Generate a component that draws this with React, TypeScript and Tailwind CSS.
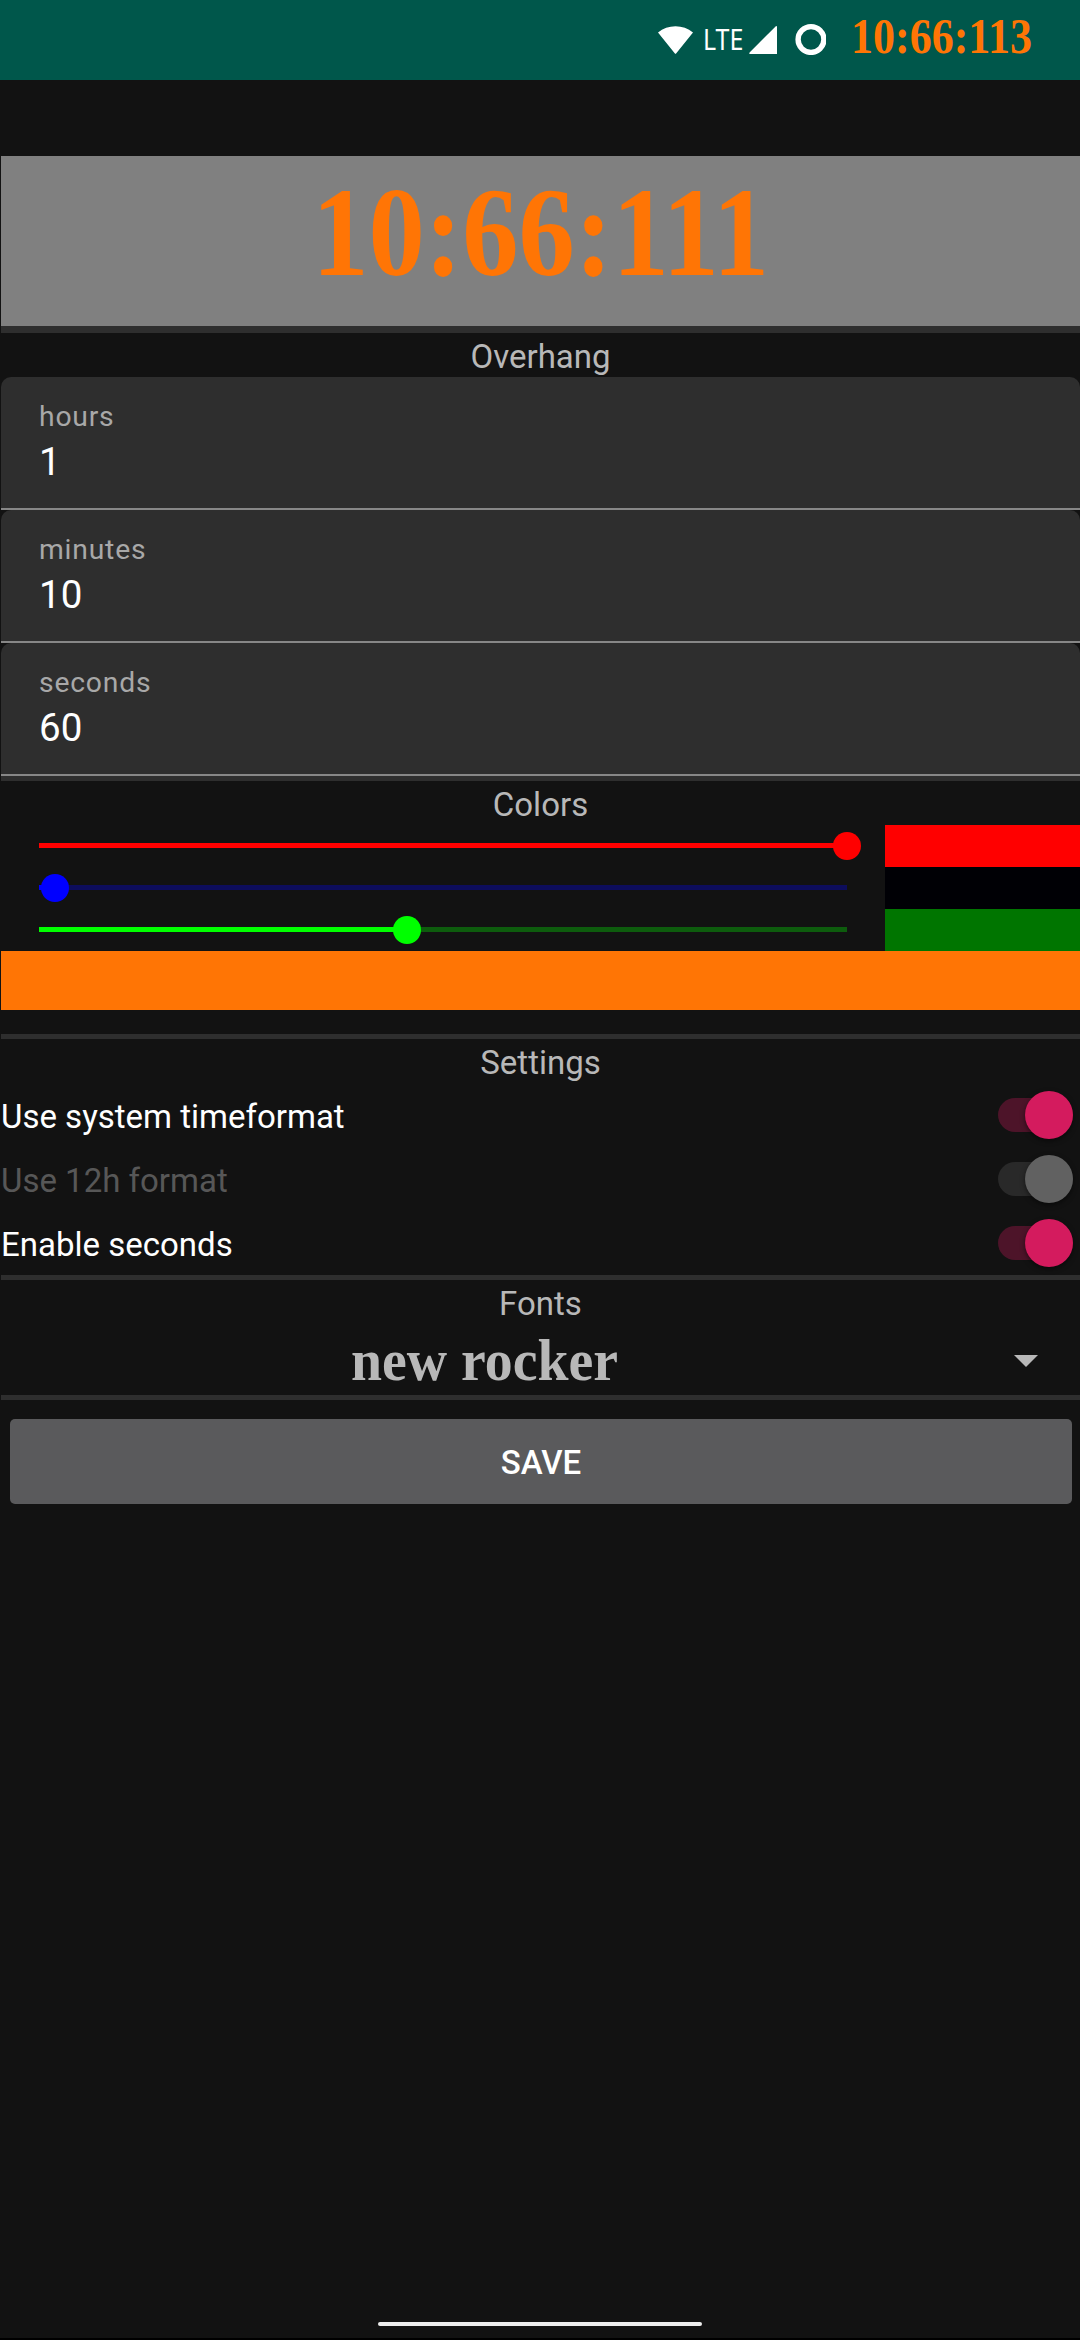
import React from "react";

function StatusBar() {
  return (
    <header className="flex h-20 shrink-0 items-start bg-[#00574b] pl-[658px]">
      <svg className="mt-[26px] h-7 w-9 shrink-0" viewBox="0 0 36 28" fill="#fff">
        <path d="M0 6.5C5 2.2 11 .2 17.5.2S30 2.2 35 6.5L18.3 27.3q-.8 1-1.6 0z" />
      </svg>
      <span className="mt-[19px] ml-[9px] w-[40px] origin-left scale-x-[0.86] font-['Noto_Sans'] text-[29px] leading-[40px] text-white">
        LTE
      </span>
      <svg className="mt-[26px] ml-[6px] h-7 w-7 shrink-0" viewBox="0 0 28 28" fill="#fff">
        <path d="M26.6.4Q28-.6 28 1v27H1Q-.4 28 .6 26.6z" />
      </svg>
      <svg className="mt-[23px] ml-[17px] h-8 w-8 shrink-0" viewBox="0 0 32 32" fill="none">
        <circle cx="17" cy="16.5" r="12.9" stroke="#fff" strokeWidth="5.4" />
      </svg>
      <span className="mt-[8px] ml-[25px] origin-left scale-x-[0.88] font-['Liberation_Serif'] text-[50px] leading-[56px] font-bold whitespace-nowrap text-[#ff7505]">
        10:66:113
      </span>
    </header>
  );
}

function Title({ children }: { children: React.ReactNode }) {
  return (
    <h2 className="h-11 text-center text-[33px] leading-[48px] text-[#b8b8b8]">{children}</h2>
  );
}

function Divider() {
  return <div className="h-[5px] bg-[#2e2e2e]" />;
}

function Field({ label, value }: { label: string; value: string }) {
  return (
    <div className="flex h-[133px] flex-col rounded-t-[10px] border-b-2 border-[#878787] bg-[#2e2e2e] pl-[38px]">
      <label className="mt-[22px] h-9 text-[28.3px] leading-9 tracking-[0.8px] text-[#a8a8a8]">{label}</label>
      <span className="mt-[4px] text-[38.5px] leading-[46px] text-white">{value}</span>
    </div>
  );
}

type SliderProps = { value: number; fill: string; track: string; swatch: string };

function Slider({ value, fill, track, swatch }: SliderProps) {
  return (
    <div className="flex h-[42px] items-stretch">
      <div className="ml-[38px] w-[808px] pt-[18px]">
        <div className={`relative h-[5px] ${track}`}>
          <div className={`h-[5px] ${fill}`} style={{ width: value }} />
          <div
            className={`absolute -top-[11px] size-7 -translate-x-1/2 rounded-full ${fill}`}
            style={{ left: value }}
          />
        </div>
      </div>
      <div className={`ml-[38px] flex-1 ${swatch}`} />
    </div>
  );
}

function Toggle({ label, disabled = false }: { label: string; disabled?: boolean }) {
  return (
    <div className="flex h-16 items-center justify-between pr-[7px]">
      <span className={`pt-[3px] text-[33px] leading-10 ${disabled ? "text-[#575757]" : "text-white"}`}>
        {label}
      </span>
      <div
        className={`flex h-[34px] w-[75px] items-center justify-end rounded-full ${
          disabled ? "bg-[#292929]" : "bg-[#4d1429]"
        }`}
      >
        <div
          className={`size-12 shrink-0 rounded-full shadow-[0_2px_5px_rgba(0,0,0,0.5)] ${
            disabled ? "bg-[#616161]" : "bg-[#d41b5e]"
          }`}
        />
      </div>
    </div>
  );
}

export default function App() {
  return (
    <div className="flex h-[2340px] w-[1080px] flex-col overflow-hidden border-b-2 border-black bg-[#121212] font-[Roboto,sans-serif]">
      <StatusBar />
      <main className="mt-[76px] flex flex-1 flex-col pl-px">
        <div className="flex h-[170px] justify-center bg-[#808080]">
          <span className="mt-[11px] h-[130px] scale-x-[0.88] font-['Liberation_Serif'] text-[128px] leading-[130px] font-bold whitespace-nowrap text-[#ff7505]">
            10:66:111
          </span>
        </div>
        <div className="h-[7px] bg-[#2e2e2e]" />
        <Title>Overhang</Title>
        <Field label="hours" value="1" />
        <Field label="minutes" value="10" />
        <Field label="seconds" value="60" />
        <Divider />
        <Title>Colors</Title>
        <Slider value={808} fill="bg-[#ff0000]" track="bg-[#5c0d0d]" swatch="bg-[#ff0000]" />
        <Slider value={16} fill="bg-[#0000ff]" track="bg-[#0d0d5c]" swatch="bg-[#000005]" />
        <Slider value={368} fill="bg-[#00ff00]" track="bg-[#0d5c0d]" swatch="bg-[#007500]" />
        <div className="h-[59px] bg-[#ff7505]" />
        <div className="h-6" />
        <Divider />
        <Title>Settings</Title>
        <Toggle label="Use system timeformat" />
        <Toggle label="Use 12h format" disabled />
        <Toggle label="Enable seconds" />
        <Divider />
        <Title>Fonts</Title>
        <div className="flex h-[71px] items-center">
          <div className="flex w-[968px] justify-center">
            <span className="scale-x-[0.93] font-['Liberation_Serif'] text-[60px] leading-[70px] font-bold whitespace-nowrap text-[#b8b8b8]">
              new rocker
            </span>
          </div>
          <svg className="mt-[2px] ml-[45px] h-3 w-6" viewBox="0 0 24 12" fill="#b8b8b8">
            <path d="M0 0h24L12 12z" />
          </svg>
        </div>
        <Divider />
        <button className="mt-[19px] mr-2 ml-[9px] h-[85px] rounded-[5px] bg-[#5a5a5c] pt-[3px] text-[33px] font-medium text-white">
          SAVE
        </button>
      </main>
      <div className="mx-auto mb-3 h-1 w-[324px] shrink-0 rounded-full bg-[#ececec]" />
    </div>
  );
}
